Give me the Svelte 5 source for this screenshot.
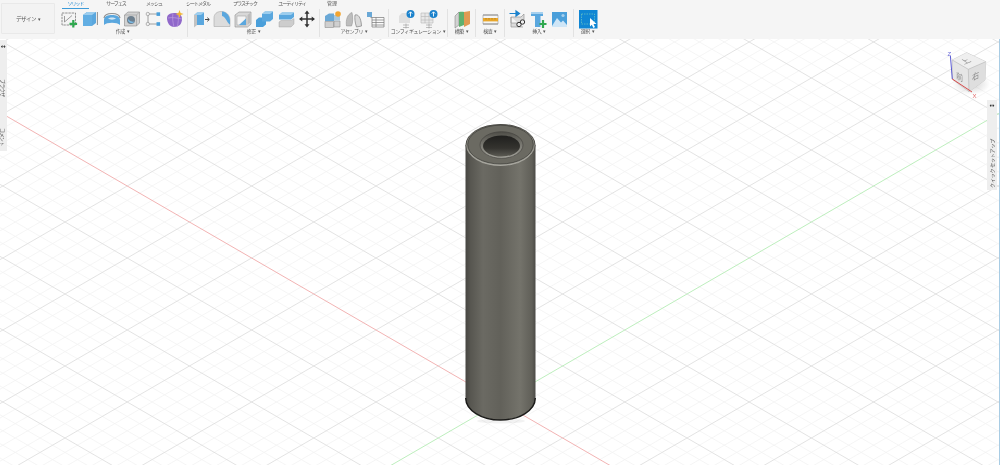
<script>
  // origin of the work plane and grid pitch, read off the view
  const ox = 500.4, oy = 402, slope = 0.5788, pitch = 14.4;

  const grid = [];
  for (let k = -50; k <= 30; k++) {
    if (k === 0) continue;
    const major = k % 5 === 0;
    grid.push({ y1: oy - slope * ox + k * pitch, y2: oy + slope * (1000 - ox) + k * pitch, major });
    grid.push({ y1: oy + slope * ox + k * pitch, y2: oy - slope * (1000 - ox) + k * pitch, major });
  }
  const minor = grid.filter((l) => !l.major);
  const majors = grid.filter((l) => l.major);

  const tabs = [
    { name: 'ソリッド', cls: 't1', on: true },
    { name: 'サーフェス', cls: 't2' },
    { name: 'メッシュ', cls: 't3' },
    { name: 'シート メタル', cls: 't4' },
    { name: 'プラスチック', cls: 't5' },
    { name: 'ユーティリティ', cls: 't6' },
    { name: '管理', cls: 't7' }
  ];
</script>

<div class="app">
  <header class="toolbar">
    <button class="workspace">デザイン <span class="caret">▾</span></button>
    <div class="ribbon">
      <div class="tabs">
        {#each tabs as tab}
          <span class="tab {tab.cls}" class:on={tab.on}>{tab.name}</span>
        {/each}
      </div>
      <div class="groups">
        <section class="group g1">
          <div class="icons">
            <svg viewBox="0 0 20 20"><rect x="2" y="4" width="13.5" height="12" fill="#f4f4f4" stroke="#777" stroke-width=".8" stroke-dasharray="2.4 .8"/><path d="M4.5 13 L12 6.5 M4.5 13 V7" stroke="#777" stroke-width=".7" fill="none"/><path d="M13.3 11 V18.6 M9.5 14.8 H17.1" stroke="#2fa84f" stroke-width="2.2"/></svg>
            <svg viewBox="0 0 20 20"><path d="M2 6 L6 3 H15 V14 L11 17 H2 Z" fill="#5aa7de"/><path d="M2 6 L6 3 H15 L11 6 Z" fill="#9ccdee"/><path d="M11 6 H2 V17 H11 Z" fill="#62aee3"/><path d="M16.4 3 V16" stroke="#666" stroke-width=".7"/></svg>
            <svg viewBox="0 0 20 20"><path d="M2 11 C2 7 6 6 10 6 C14 6 18 7 18 11 L18 16 C15 13 5 13 2 16 Z" fill="#5aa7de"/><path d="M2 9 C3 3 17 3 18 9" fill="none" stroke="#8f8f8f" stroke-width="1.2"/><path d="M6 9.5 C8 8 12 8 14 9.5 C12 11 8 11 6 9.5 Z" fill="#d5e6f2"/></svg>
            <svg viewBox="0 0 20 20"><path d="M1.5 6 L5 3 H16.5 V14 L13.5 17 H1.5 Z" fill="#d2d2d2" stroke="#8a8a8a" stroke-width=".6"/><path d="M1.5 6 H13.5 V17 M13.5 6 L16.5 3" fill="none" stroke="#9a9a9a" stroke-width=".6"/><circle cx="8" cy="11" r="4" fill="#6d7f8e"/><path d="M5 10 A3.6 3.6 0 0 0 11.5 12.5 A6 6 0 0 1 5 10 Z" fill="#7cbde9"/></svg>
            <svg viewBox="0 0 20 20"><path d="M4 5 H13 M4 5 V15 M4 15 H13" stroke="#8a8a8a" stroke-width=".8" fill="none"/><circle cx="3.8" cy="5" r="1.7" fill="#f2f2f2" stroke="#888" stroke-width=".6"/><circle cx="3.8" cy="15" r="1.7" fill="#f2f2f2" stroke="#888" stroke-width=".6"/><rect x="12.5" y="3.3" width="3.6" height="3.6" fill="#4a9fda"/><rect x="12.5" y="13.2" width="3.6" height="3.6" fill="#4a9fda"/></svg>
            <svg viewBox="0 0 20 20"><path d="M2 9 C2 5 6 4 10 4 C14 4 17 6 17 10 C17 15 14 18 9 18 C5 18 2 14 2 9 Z" fill="#9068ca"/><path d="M3 9 C7 8 12 9 17 10 M8 4.5 C7 9 8 14 9 18 M13 5 C14 9 13 14 12.5 17.5" fill="none" stroke="#bb9ce0" stroke-width=".7"/><path d="M14.5 1 L15.6 4 L18.6 5 L15.6 6 L14.5 9 L13.4 6 L10.4 5 L13.4 4 Z" fill="#f2b632"/></svg>
          </div>
          <span class="label">作成 <span class="caret">▾</span></span>
        </section>
        <section class="group g2">
          <div class="icons">
            <svg viewBox="0 0 20 20"><path d="M3 6 L6 3.5 V16 L3 18.5 Z" fill="#c2c2c2"/><path d="M6 3.5 H13 V16 H6 Z" fill="#5aa7de"/><path d="M3 6 L6 3.5 H13 L10 6 Z" fill="#9ccdee"/><path d="M14 10.5 H18 M16.3 8.7 L18.3 10.5 L16.3 12.3" stroke="#444" stroke-width="1" fill="none"/></svg>
            <svg viewBox="0 0 20 20"><path d="M2 9 C2 5 5 2.5 9 2.5 C14 2.5 18 6 18 11 V17.5 H2 Z" fill="#dcdcdc" stroke="#aaa" stroke-width=".6"/><path d="M10 2.5 C15 3 18 7 18 12 V15.5 C15 14 14 8 10 7 Z" fill="#5aa7de"/></svg>
            <svg viewBox="0 0 20 20"><path d="M2 6 L6 3 H18 V15 L14.5 18 H2 Z" fill="#d8d8d8" stroke="#8f8f8f" stroke-width=".6"/><rect x="4" y="7" width="9" height="9" fill="#f4f4f4" stroke="#999" stroke-width=".5"/><path d="M6 16 L13 9.5 V16 Z" fill="#5aa7de"/><path d="M14.5 6 L17 4 V13.5 L14.5 16 Z" fill="#bcbcbc"/></svg>
            <svg viewBox="0 0 20 20"><path d="M2 11 L5 8.5 H12 V15.5 L9 18 H2 Z" fill="#4a9fda"/><path d="M8 5 L11 2.5 H19 V10 L16 12.5 H8 Z" fill="#5aa7de"/><path d="M8 5 L11 2.5 H19 L16 5 Z" fill="#9ccdee"/></svg>
            <svg viewBox="0 0 20 20"><path d="M4 6 L7 3.5 H19 V8 L16 10.5 H4 Z" fill="#5aa7de"/><path d="M4 6 L7 3.5 H19 L16 6 Z" fill="#9ccdee"/><path d="M4 13 L6 11.5 H16 L19 9.5 V15 L16 18 H4 Z" fill="#cdcdcd" stroke="#999" stroke-width=".4"/></svg>
            <svg viewBox="0 0 20 20"><path d="M11 3 V17 M4 10 H18" stroke="#333" stroke-width="1.5"/><path d="M11 1.5 L13.5 4.8 H8.5 Z M11 18.5 L13.5 15.2 H8.5 Z M3 10 L6.3 7.5 V12.5 Z M19 10 L15.7 7.5 V12.5 Z" fill="#333"/></svg>
          </div>
          <span class="label">修正 <span class="caret">▾</span></span>
        </section>
        <section class="group g3">
          <div class="icons">
            <svg viewBox="0 0 20 20"><path d="M2 7 L6 4.5 H11 V12 H2 Z" fill="#6aa8d6"/><path d="M11 12 H17 V18 H11 Z M2 12.5 H10.5 V18.5 H2 Z" fill="#cfcfcf" stroke="#8f8f8f" stroke-width=".6"/><path d="M11 6 H17 V11.5 H11 Z" fill="#a9c8de"/><circle cx="15" cy="5" r="2.8" fill="#f2a531"/></svg>
            <svg viewBox="0 0 20 20"><path d="M2.5 17 C1.5 11 3.5 5 8 3.5 C9 8 9 14 7.5 17 Z" fill="#bdbdbd" stroke="#8c8c8c" stroke-width=".5"/><path d="M11 6 C14 5 17 8 17.5 17 L12.5 18 C11 14 10.5 9 11 6 Z" fill="#d9d9d9" stroke="#8c8c8c" stroke-width=".8"/></svg>
            <svg viewBox="0 0 20 20"><rect x="2" y="3" width="5" height="5" fill="#6aa8d6"/><path d="M5.5 8.5 H19 V18 H7 V8.5 M7 11 H19 M7 13.5 H19 M7 16 H19 M11 8.5 V18" fill="#fafafa" stroke="#777" stroke-width=".7"/></svg>
          </div>
          <span class="label">アセンブリ <span class="caret">▾</span></span>
        </section>
        <section class="group g4">
          <div class="icons wide">
            <svg viewBox="0 0 20 20"><path d="M2 7 L5 4 H13 V14 H2 Z" fill="#e0e0e0"/><circle cx="13.5" cy="5" r="4" fill="#1b82cc"/><path d="M13.5 7.5 V3 M11.8 4.6 L13.5 2.8 L15.2 4.6" stroke="#fff" stroke-width=".9" fill="none"/><path d="M6 16 H12 M6 18.5 H12 M9 14.5 V19.5" stroke="#999" stroke-width=".6"/></svg>
            <svg viewBox="0 0 20 20"><path d="M2 4 H14 V14 H2 Z M2 7.5 H14 M2 11 H14 M6 4 V14 M10 4 V14" fill="#e8e8e8" stroke="#b5b5b5" stroke-width=".6"/><circle cx="14.5" cy="5" r="4" fill="#1b82cc"/><path d="M14.5 7.5 V3 M12.8 4.6 L14.5 2.8 L16.2 4.6" stroke="#fff" stroke-width=".9" fill="none"/><path d="M7 16 H13 M7 18.5 H13 M10 14.5 V19.5" stroke="#999" stroke-width=".6"/></svg>
          </div>
          <span class="label">コンフィギュレーション <span class="caret">▾</span></span>
        </section>
        <section class="group g5">
          <div class="icons">
            <svg viewBox="0 0 20 20"><path d="M3 7 L7 3 V16 L3 19 Z" fill="#d2d2d2" stroke="#777" stroke-width=".5"/><path d="M7 3 C9 2.5 11 2.5 12 3 V16 L7 18 Z" fill="#5fb06e"/><path d="M12 3 L18 2 V15 L12 18 Z" fill="#e09a52"/></svg>
          </div>
          <span class="label">構築 <span class="caret">▾</span></span>
        </section>
        <section class="group g6">
          <div class="icons">
            <svg viewBox="0 0 20 20"><path d="M3 6 H18 M3 15 H18" stroke="#6a6a6a" stroke-width=".9"/><path d="M3 6 V15 M18 6 V15" stroke="#999" stroke-width=".6"/><rect x="3" y="9" width="15" height="3.4" fill="#e9a72b"/><path d="M6 9 V10.5 M9 9 V10.5 M12 9 V10.5 M15 9 V10.5" stroke="#8a6210" stroke-width=".5"/></svg>
          </div>
          <span class="label">検査 <span class="caret">▾</span></span>
        </section>
        <section class="group g7">
          <div class="icons">
            <svg viewBox="0 0 20 20"><path d="M3 8 H13 L16 5 V14 H3 Z M3 8 V18 H15" fill="#dcdcdc" stroke="#8a8a8a" stroke-width=".6"/><path d="M1.5 4.5 H8 M8 2 L11.5 4.5 L8 7 Z" stroke="#1b82cc" stroke-width="1.2" fill="#1b82cc"/><circle cx="11" cy="15.5" r="2.2" fill="#eee" stroke="#333" stroke-width="1"/><circle cx="14.5" cy="13" r="2.2" fill="#eee" stroke="#333" stroke-width="1"/></svg>
            <svg viewBox="0 0 20 20"><path d="M2 3 H14 V7 H11.5 V18 H6 V7 H2 Z" fill="#5aa7de"/><path d="M2 3 H14 V5 H2 Z" fill="#a6d0ee"/><path d="M14 11 V19 M10.5 15 H17.5" stroke="#2fa84f" stroke-width="2.2"/></svg>
            <svg viewBox="0 0 20 20"><rect x="2" y="3" width="15" height="15" fill="#4a9fda"/><path d="M2 17 L7 9 L11 13.5 L13 11.5 L17 16 V18 H2 Z" fill="#cfe6f7"/><circle cx="13" cy="6.5" r="1.6" fill="#a6d0ee"/></svg>
          </div>
          <span class="label">挿入 <span class="caret">▾</span></span>
        </section>
        <section class="group g8">
          <div class="icons">
            <svg viewBox="0 0 20 20"><rect x="1" y="1" width="18.5" height="18.5" fill="#0f86d4"/><path d="M3.5 5 H16.5 V15" fill="none" stroke="#7fd3c0" stroke-width=".6" stroke-dasharray="1.5 1"/><path d="M3.5 5 V15 H12" fill="none" stroke="#7fd3c0" stroke-width=".6" stroke-dasharray="1.5 1"/><path d="M12 9 L18.5 15 H15.5 L17 18 L15.4 19 L13.8 15.8 L12 17.5 Z" fill="#fff"/></svg>
          </div>
          <span class="label">選択 <span class="caret">▾</span></span>
        </section>
      </div>
    </div>
  </header>

  <main class="canvas">
    <svg class="scene" viewBox="0 39 1000 426">
      <defs>
        <linearGradient id="body" x1="0" x2="1" y1="0" y2="0">
          <stop offset="0" stop-color="#464541"/>
          <stop offset=".07" stop-color="#575650"/>
          <stop offset=".25" stop-color="#6b6a63"/>
          <stop offset=".5" stop-color="#62615a"/>
          <stop offset=".78" stop-color="#74736b"/>
          <stop offset=".95" stop-color="#605f58"/>
          <stop offset="1" stop-color="#4b4a46"/>
        </linearGradient>
        <linearGradient id="hole" x1="0" x2="0" y1="0" y2="1">
          <stop offset="0" stop-color="#1f1f1d"/>
          <stop offset=".6" stop-color="#34332f"/>
          <stop offset="1" stop-color="#5c5b54"/>
        </linearGradient>
        <linearGradient id="bevel" x1="0" x2="0" y1="0" y2="1">
          <stop offset="0" stop-color="#4e4d47"/>
          <stop offset="1" stop-color="#a5a49c"/>
        </linearGradient>
        <linearGradient id="rim" x1="0" x2="0" y1="0" y2="1">
          <stop offset="0" stop-color="#7b7a72"/>
          <stop offset="1" stop-color="#a8a79f"/>
        </linearGradient>
        <radialGradient id="cubeshade"><stop offset="0" stop-color="#999" stop-opacity=".45"/><stop offset="1" stop-color="#999" stop-opacity="0"/></radialGradient>
      </defs>

      {#each minor as l}
        <line x1="0" x2="1000" y1={l.y1} y2={l.y2} stroke="#f2f2f2" stroke-width=".8"/>
      {/each}
      {#each majors as l}
        <line x1="0" x2="1000" y1={l.y1} y2={l.y2} stroke="#dcdcdc" stroke-width=".8"/>
      {/each}
      <line x1="0" x2="1000" y1={oy - slope * ox} y2={oy + slope * (1000 - ox)} stroke="#f0aaaa" stroke-width=".9"/>
      <line x1="0" x2="1000" y1={oy + slope * ox} y2={oy - slope * (1000 - ox)} stroke="#b6ecb6" stroke-width=".9"/>

      <!-- cylinder -->
      <ellipse cx="501" cy="421" rx="24" ry="2.5" fill="#000" opacity=".05"/>
      <path d="M465.5 145 V398 A35 22 0 0 0 535.5 398 V145 Z" fill="url(#body)"/>
      <path d="M465.7 398 A34.8 22 0 0 0 535.3 398" fill="none" stroke="#1b1b19" stroke-width="1.4"/>
      <ellipse cx="500.5" cy="145" rx="35" ry="21" fill="#45443f"/>
      <ellipse cx="500.5" cy="145.4" rx="34.3" ry="20.7" fill="url(#rim)"/>
      <ellipse cx="500.5" cy="144.6" rx="32.8" ry="19.4" fill="#6b6a62" stroke="#3a3935" stroke-width=".7"/>
      <ellipse cx="501.5" cy="145" rx="21.5" ry="13.3" fill="url(#bevel)" stroke="#3f3e3a" stroke-width=".6"/>
      <ellipse cx="501.5" cy="146" rx="18.5" ry="10.6" fill="url(#hole)"/>

      <!-- view cube -->
      <ellipse cx="971" cy="84" rx="19" ry="11" fill="url(#cubeshade)"/>
      <path d="M952.3 60 L966.7 52.7 L985.7 61.7 L985 80 L969 91.7 L952.3 79.3 Z" fill="#e6e6e6" stroke="#c0c0c0" stroke-width=".7"/>
      <path d="M952.3 60 L966.7 52.7 L985.7 61.7 L968.3 69.3 Z" fill="#efefef"/>
      <path d="M968.3 69.3 L985.7 61.7 L985 80 L969 91.7 Z" fill="#dedede"/>
      <path d="M952.3 60 L968.3 69.3 L985.7 61.7 M968.3 69.3 L969 91.7" fill="none" stroke="#b5b5b5" stroke-width=".6"/>
      <text class="cube" transform="matrix(.85 -.35 .75 .5 964 64.5)">上</text>
      <text class="cube" transform="matrix(.8 .45 0 .95 956 78)">前</text>
      <text class="cube" transform="matrix(.8 -.4 0 .95 972 81)">右</text>
      <line x1="952.3" y1="79" x2="950.4" y2="56" stroke="#5a5ad2" stroke-width="1"/>
      <line x1="952.3" y1="79" x2="972" y2="92" stroke="#d84a4a" stroke-width="1"/>
      <text class="axis z" x="947.5" y="56">Z</text>
      <text class="axis x" x="972.5" y="98">X</text>
    </svg>

    <aside class="side left">
      <span class="handle">↔</span>
      <span class="vert first">ブラウザ</span>
      <span class="vert">コメント</span>
    </aside>
    <aside class="side right">
      <span class="handle">↔</span>
      <span class="vert">クイック セットアップ</span>
    </aside>
  </main>
</div>

<style>
  :global(body) {
    margin: 0;
    background: #fff;
  }

  .app {
    width: 1000px;
    height: 465px;
    display: flex;
    flex-direction: column;
    overflow: hidden;
    font-family: "Noto Sans CJK JP", "Noto Sans", sans-serif;
    color: #555;
    filter: blur(0.3px);
  }

  .toolbar {
    height: 39px;
    flex: none;
    display: flex;
    background: #f5f5f5;
  }

  .workspace {
    width: 54px;
    height: 31px;
    margin: 3px 0 0 1px;
    padding: 0;
    flex: none;
    font: inherit;
    font-size: 5.5px;
    letter-spacing: -0.5px;
    color: #555;
    background: #f3f3f3;
    border: 1px solid #e9e9e9;
    border-radius: 1px;
  }

  .caret {
    font-size: 5px;
    margin-left: 1px;
  }

  .ribbon {
    flex: 1;
    margin-left: 3px;
  }

  .tabs {
    height: 9px;
    display: flex;
    padding-left: 4px;
  }

  .tab {
    height: 8px;
    font-size: 5px;
    line-height: 6px;
    letter-spacing: -1px;
    text-align: center;
    white-space: nowrap;
  }

  .tab.on {
    color: #2f8fd2;
    border-bottom: 1px solid #3d9bd8;
  }

  .t1 { width: 27px; }
  .t2 { width: 54px; }
  .t3 { width: 22px; }
  .t4 { width: 66px; }
  .t5 { width: 28px; }
  .t6 { width: 66px; }
  .t7 { width: 14px; letter-spacing: 0; }

  .groups {
    display: flex;
  }

  .group {
    height: 28px;
    flex: none;
    display: flex;
    flex-direction: column;
    align-items: center;
    border-right: 1px solid #e2e2e2;
  }

  .g1 { width: 129px; }
  .g2 { width: 131px; }
  .g3 { width: 68px; }
  .g4 { width: 58px; }
  .g5 { width: 27px; }
  .g6 { width: 28px; }
  .g7 { width: 68px; }
  .g8 { width: 27px; border-right: none; }

  .icons {
    height: 19px;
    display: flex;
    gap: 1px;
  }

  .icons.wide {
    gap: 2px;
  }

  .icons svg {
    width: 20px;
    height: 20px;
    display: block;
  }

  .label {
    height: 7px;
    font-size: 5px;
    line-height: 6px;
    white-space: nowrap;
    letter-spacing: -0.4px;
  }

  .canvas {
    position: relative;
    flex: 1;
    background: #fff;
  }

  .scene {
    width: 1000px;
    height: 426px;
    display: block;
  }

  .cube {
    font-size: 9px;
    fill: #8c8c8c;
  }

  .axis {
    font-size: 6px;
    font-family: "Liberation Sans", sans-serif;
  }

  .axis.z { fill: #6a6ad8; }
  .axis.x { fill: #e06a6a; }

  .side {
    position: absolute;
    display: flex;
    flex-direction: column;
    align-items: center;
    background: #eeeeee;
    font-size: 5px;
    color: #555;
  }

  .handle {
    font-size: 5px;
    line-height: 6px;
    color: #222;
    font-weight: 700;
  }

  .vert {
    writing-mode: vertical-rl;
    text-orientation: sideways;
    white-space: nowrap;
    letter-spacing: -0.6px;
    line-height: 6px;
  }

  .left {
    left: 0;
    top: 1px;
    width: 6.5px;
    height: 111px;
    padding-top: 3px;
    box-sizing: border-box;
  }

  .left .first {
    margin: 30px 0 31px;
  }

  .right {
    left: 987px;
    top: 61px;
    width: 10px;
    height: 90px;
    padding-top: 2px;
    box-sizing: border-box;
  }

  .right .vert {
    margin-top: 31px;
    letter-spacing: -0.2px;
    transform: rotate(180deg);
  }

  .canvas::after {
    content: "";
    position: absolute;
    right: 0;
    top: 0;
    bottom: 0;
    width: 1.5px;
    background: #a8cce4;
  }
</style>
